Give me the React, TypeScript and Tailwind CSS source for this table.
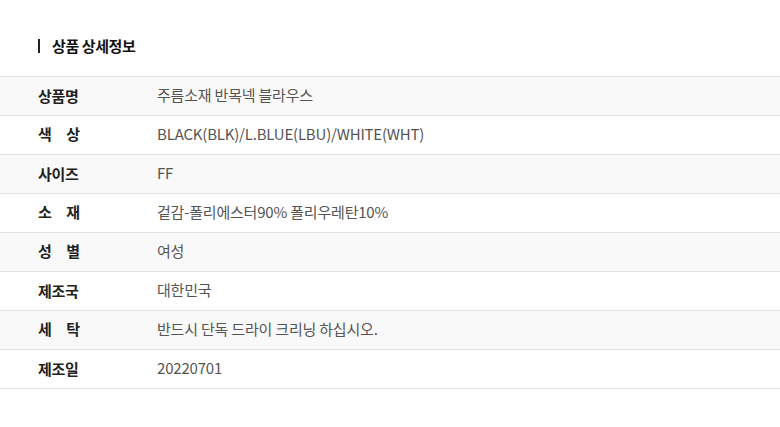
const ROWS: { label: string; spaced?: boolean; value: string }[] = [
  { label: "상품명", value: "주름소재 반목넥 블라우스" },
  { label: "색상", spaced: true, value: "BLACK(BLK)/L.BLUE(LBU)/WHITE(WHT)" },
  { label: "사이즈", value: "FF" },
  { label: "소재", spaced: true, value: "겉감-폴리에스터90% 폴리우레탄10%" },
  { label: "성별", spaced: true, value: "여성" },
  { label: "제조국", value: "대한민국" },
  { label: "세탁", spaced: true, value: "반드시 단독 드라이 크리닝 하십시오." },
  { label: "제조일", value: "20220701" },
];

export default function App() {
  return (
    <div className="h-[427px] w-[780px] bg-white font-['Noto_Sans_CJK_KR','Noto_Sans',sans-serif]">
      <div className="flex h-[76px] items-center gap-[12px] pl-[38px] pt-[16px]">
        <span className="h-[14px] w-[2px] bg-[#222]" />
        <h2 className="text-[15px] font-bold tracking-[-0.4px] text-[#111]">상품 상세정보</h2>
      </div>
      <div className="border-t border-[#e2e2e2]">
        {ROWS.map((row, i) => (
          <div
            key={row.label}
            className={`flex h-[39px] items-center border-b border-[#e2e2e2] pb-[2px] ${
              i % 2 === 0 ? "bg-[#f9f9f9]" : "bg-white"
            }`}
          >
            <div className="w-[157px] pl-[38px]">
              {row.spaced ? (
                <span className="flex w-[42px] justify-between text-[15px] font-bold text-[#222]">
                  {row.label.split("").map((c) => (
                    <span key={c}>{c}</span>
                  ))}
                </span>
              ) : (
                <span className="text-[15px] font-bold tracking-[-0.3px] text-[#222]">{row.label}</span>
              )}
            </div>
            <div className="text-[15px] tracking-[-0.2px] text-[#555]">{row.value}</div>
          </div>
        ))}
      </div>
    </div>
  );
}
